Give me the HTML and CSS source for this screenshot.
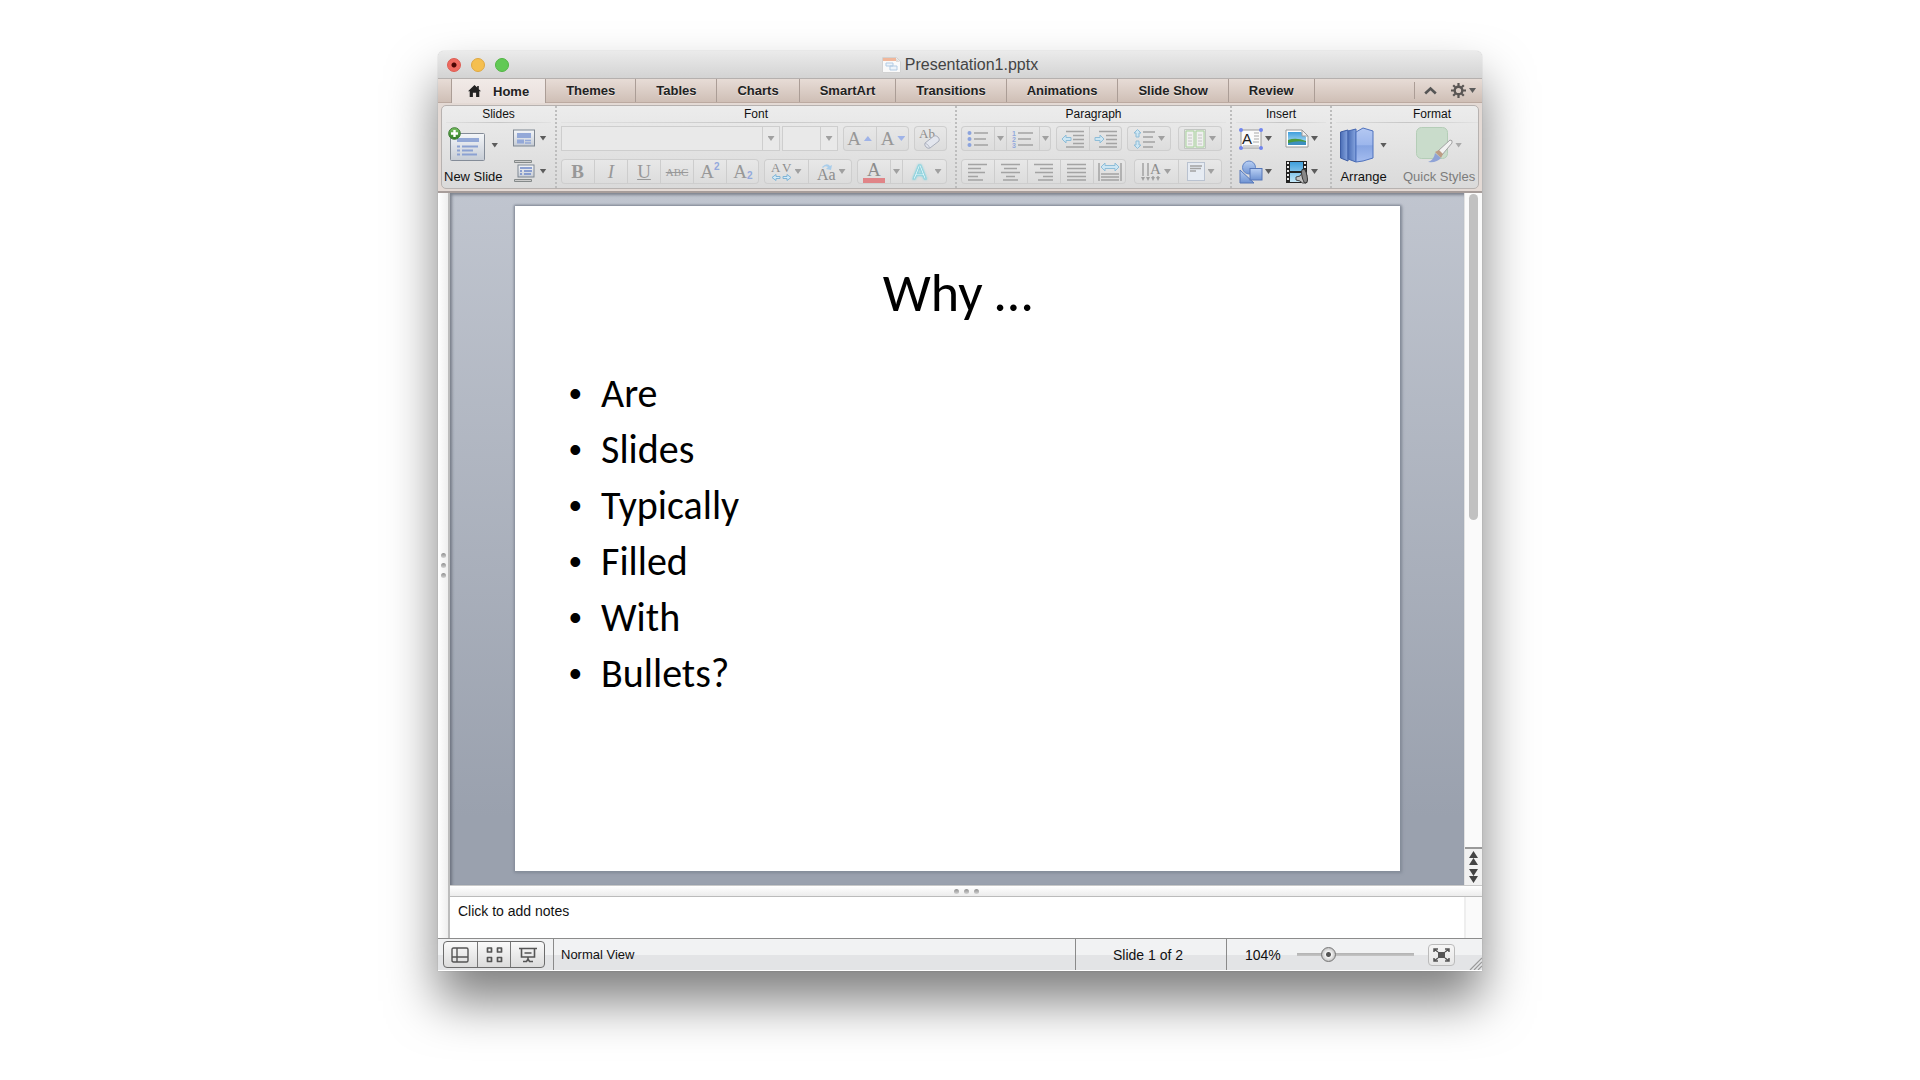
FILE: index.html
```html
<!DOCTYPE html>
<html lang="en">
<head>
<meta charset="utf-8">
<title>Presentation1.pptx</title>
<link rel="stylesheet" href="styles.css">
</head>
<body>
<svg class="defs" aria-hidden="true">
  <defs>
    <linearGradient id="paper" x1="0" y1="0" x2="0" y2="1"><stop offset="0" stop-color="#f4f6f9"/><stop offset="1" stop-color="#c6ccd5"/></linearGradient>
    <linearGradient id="blue" x1="0" y1="0" x2="0" y2="1"><stop offset="0" stop-color="#b9d0f4"/><stop offset="1" stop-color="#6f93d2"/></linearGradient>
    <linearGradient id="deep" x1="0" y1="0" x2="1" y2="0"><stop offset="0" stop-color="#4a6db5"/><stop offset="1" stop-color="#87a6e0"/></linearGradient>
    <linearGradient id="panel" x1="0" y1="0" x2="0" y2="1"><stop offset="0" stop-color="#b4c8f2"/><stop offset=".5" stop-color="#9cb6ec"/><stop offset=".52" stop-color="#86a4e2"/><stop offset="1" stop-color="#a5bdef"/></linearGradient>
    <linearGradient id="sky" x1="0" y1="0" x2="0" y2="1"><stop offset="0" stop-color="#3f9fdc"/><stop offset="1" stop-color="#c4e8f8"/></linearGradient>
    <linearGradient id="green" x1="0" y1="0" x2="0" y2="1"><stop offset="0" stop-color="#7cc365"/><stop offset="1" stop-color="#2f7a24"/></linearGradient>
  </defs>
</svg>

<main class="window">
  <header class="titlebar">
    <div class="lights">
      <button class="light close" aria-label="Close"></button>
      <button class="light minimize" aria-label="Minimize"></button>
      <button class="light maximize" aria-label="Zoom window"></button>
    </div>
    <div class="doc-title">
      <svg width="19" height="16" viewBox="0 0 19 16"><path d="M.5.5h14l4 4v11H.5z" fill="#fafafa" stroke="#d2d2d2"/><path d="M1 1h13v3H1z" fill="#f0b79b"/><path d="M14 1v4h4z" fill="#ddd"/><path d="M4 6h7v3H4zM8 9h7v4H8z" fill="#eef4fa" stroke="#b3cbe3"/></svg>
      <span>Presentation1.pptx</span>
    </div>
  </header>

  <nav class="tabs">
    <button class="tab home"><svg width="13" height="12" viewBox="0 0 13 12"><path d="M6.500 0 0 6.300h1.700V12h3.200V7.800h3.200V12h3.200V6.300H13L10.800 4.200V1H9.200v1.600z" fill="#222"/></svg>Home</button>
    <button class="tab">Themes</button>
    <button class="tab">Tables</button>
    <button class="tab">Charts</button>
    <button class="tab">SmartArt</button>
    <button class="tab">Transitions</button>
    <button class="tab">Animations</button>
    <button class="tab">Slide Show</button>
    <button class="tab">Review</button>
    <div class="tab-tools">
      <button class="plain" aria-label="Collapse ribbon"><svg width="13" height="9" viewBox="0 0 13 9"><path d="m1.200 7.500 5.300-5 5.300 5" fill="none" stroke="#555" stroke-width="2.600"/></svg></button>
      <button class="plain" aria-label="Ribbon preferences"><svg width="15" height="15" viewBox="0 0 15 15"><circle cx="7.500" cy="7.500" r="3.800" fill="none" stroke="#5a5654" stroke-width="2.400"/><path d="M7.500 0v3M7.500 12v3M0 7.500h3M12 7.500h3M2.200 2.200l2.100 2.100M10.700 10.700l2.100 2.100M12.800 2.200l-2.100 2.100M4.300 10.700l-2.100 2.100" stroke="#5a5654" stroke-width="2.200"/></svg><i class="arrow"></i></button>
    </div>
  </nav>

  <div class="ribbon">
    <div class="panel">
      <section class="group">
        <h2>Slides</h2>
        <div class="slides-tools">
          <button class="big">
            <span class="big-icon"><svg width="37" height="36" viewBox="0 0 37 36"><rect x="2.500" y="6.500" width="34" height="27" rx="1" fill="url(#paper)" stroke="#848c98"/><path d="M9 11h22v4H9z" fill="#93a8d6"/><path d="M9 19.500h3M14 19.500h16M9 23.500h3M14 23.500h11M9 27.500h3M14 27.500h15" stroke="#8ba1d2" stroke-width="2"/><circle cx="6.500" cy="6.500" r="5.800" fill="url(#green)" stroke="#3a7a30"/><path d="M6.500 3v7M3 6.500h7" stroke="#fff" stroke-width="2.400"/></svg><i class="arrow"></i></span>
            <span>New Slide</span>
          </button>
          <div class="stack">
            <button class="plain" aria-label="Layout"><svg width="22" height="24" viewBox="0 0 22 24"><rect x=".5" y="4" width="21" height="16" fill="url(#paper)" stroke="#7f8792"/><path d="M4 7h14v5H4zM4 13.500h7v4H4z" fill="#93a8d8"/><path d="M12 14.500h6M12 17h6" stroke="#93a8d8" stroke-width="1.500"/></svg><i class="arrow"></i></button>
            <button class="plain" aria-label="Section"><svg width="22" height="24" viewBox="0 0 22 24"><path d="M1.500 1.500h17v2h-17zM1.500 20.500h17v2h-17z" fill="#ccc" stroke="#858a8a"/><rect x="5" y="6" width="16" height="12" fill="url(#paper)" stroke="#7f8792"/><path d="M7 9h12M7 12h2M11 12h8M7 15h2M11 15h7" stroke="#6f88c8" stroke-width="1.600"/></svg><i class="arrow"></i></button>
          </div>
        </div>
      </section>

      <section class="group dim">
        <h2>Font</h2>
        <div class="rows">
          <div class="row">
            <div class="combos">
              <div class="combo font-name"><input type="text" aria-label="Font name"><button aria-label="Font list"><i class="arrow"></i></button></div>
              <div class="combo font-size"><input type="text" aria-label="Font size"><button aria-label="Size list"><i class="arrow"></i></button></div>
            </div>
            <div class="set"><button aria-label="Grow font"><span class="glyph thin">A</span><i class="arrow up blue"></i></button><button aria-label="Shrink font"><span class="glyph thin">A</span><i class="arrow blue"></i></button></div>
            <div class="set last"><button aria-label="Clear formatting"><svg width="26" height="23" viewBox="0 0 26 23"><text x="1" y="11" class="svg-serif" font-size="13">Ab</text><path d="m7 16 9-7q2-1 4 1t1 4l-9 7q-2 1-4-1t-1-4z" fill="#e3e6ee" stroke="#a9aebb"/><path d="M7 16q3 1 5 5" fill="none" stroke="#b5b9c5"/></svg></button></div>
          </div>
          <div class="row">
            <div class="set"><button><b class="glyph">B</b></button><button><i class="glyph">I</i></button><button><u class="glyph">U</u></button><button><s class="glyph small">ABC</s></button><button><span class="glyph thin">A</span><sup>2</sup></button><button><span class="glyph thin">A</span><sub>2</sub></button></div>
            <div class="set wide"><button aria-label="Character spacing"><svg width="21" height="22" viewBox="0 0 21 22"><text x="0" y="11" class="svg-serif" font-size="13">A</text><text x="11" y="11" class="svg-serif" font-size="13">V</text><path d="m1 16.500 4-3v2h4v2H5v2zM20 16.500l-4-3v2h-4v2h4v2z" fill="#d3eaf7" stroke="#7fb4d6"/></svg><i class="arrow"></i></button><button aria-label="Change case"><svg width="20" height="22" viewBox="0 0 20 22"><text x="1" y="19" class="svg-serif" font-size="16">Aa</text><path d="M6 6q5-5 8-1l2-1-1 5-5-1 2-2q-3-2-5 1z" fill="#a9cdea"/></svg><i class="arrow"></i></button></div>
            <div class="set color-set"><button aria-label="Font color"><svg width="24" height="24" viewBox="0 0 24 24"><text x="5" y="16" class="svg-serif" font-size="19">A</text><path d="M1 18h22v5H1z" fill="#e08487"/></svg></button><button class="drop" aria-label="Font color list"><i class="arrow"></i></button><button aria-label="Text effects"><svg width="22" height="22" viewBox="0 0 22 22"><text x="4" y="18" class="effect" font-size="20">A</text></svg><i class="arrow"></i></button></div>
          </div>
        </div>
      </section>

      <section class="group dim">
        <h2>Paragraph</h2>
        <div class="rows">
          <div class="row">
            <div class="set"><button aria-label="Bullets"><svg width="22" height="18" viewBox="0 0 22 18"><g fill="#8ba3dd"><circle cx="2.500" cy="3" r="2"/><circle cx="2.500" cy="9" r="2"/><circle cx="2.500" cy="15" r="2"/></g><path class="ln" d="M7 3h14M7 9h12M7 15h14"/></svg></button><button class="drop" aria-label="Bullet list"><i class="arrow"></i></button><button aria-label="Numbering"><svg width="22" height="18" viewBox="0 0 22 18"><g class="digits"><text x="0" y="6">1</text><text x="0" y="12">2</text><text x="0" y="18">3</text></g><path class="ln" d="M6 3h15M6 9h13M6 15h15"/></svg></button><button class="drop" aria-label="Number list"><i class="arrow"></i></button></div>
            <div class="set"><button aria-label="Decrease indent"><svg width="24" height="18" viewBox="0 0 24 18"><path class="ln" d="M5 1.500h18M12 5.500h11M12 9.500h11M12 13.500h11M5 17h18"/><path class="cy" d="m1 9 4-4v2.500h5v3H5V13z"/></svg></button><button aria-label="Increase indent"><svg width="24" height="18" viewBox="0 0 24 18"><path class="ln" d="M5 1.500h18M12 5.500h11M12 9.500h11M12 13.500h11M5 17h18"/><path class="cy" d="m10 9-4-4v2.500H1v3h5V13z"/></svg></button></div>
            <div class="set wide"><button aria-label="Line spacing"><svg width="22" height="20" viewBox="0 0 22 20"><path class="ln" d="M10 3h12M10 8h10M10 13h12M10 18h10"/><path class="cy" d="M4.500.5 8 4H6v4H3V4H1zM4.500 19.500 8 16H6v-4H3v4H1z"/></svg><i class="arrow"></i></button></div>
            <div class="set last wide"><button aria-label="Columns"><svg width="22" height="20" viewBox="0 0 22 20"><path d="M.5.500h21v19H.5z" fill="#e3e6e3" stroke="#c2c6c2"/><path d="M2 2h8v16H2zM12 2h8v16h-8z" fill="#efefef" stroke="#a8d39b"/><path d="M4 6h4M4 9h4M4 12h4M4 15h4M14 6h4M14 9h4M14 12h4M14 15h4" stroke="#c4c4c4"/></svg><i class="arrow"></i></button></div>
          </div>
          <div class="row">
            <div class="set"><button aria-label="Align left"><svg width="20" height="18" viewBox="0 0 20 18"><path class="ln" d="M0 1.500h19M0 5.500h13M0 9.500h17M0 13.500h10M0 17h15"/></svg></button><button aria-label="Center"><svg width="20" height="18" viewBox="0 0 20 18"><path class="ln" d="M0 1.500h19M3 5.500h13M0 9.500h19M5 13.500h9M2 17h15"/></svg></button><button aria-label="Align right"><svg width="20" height="18" viewBox="0 0 20 18"><path class="ln" d="M0 1.500h19M6 5.500h13M1 9.500h18M9 13.500h10M4 17h15"/></svg></button><button aria-label="Justify"><svg width="20" height="18" viewBox="0 0 20 18"><path class="ln" d="M0 1.500h19M0 5.500h19M0 9.500h19M0 13.500h19M0 17h19"/></svg></button><button aria-label="Distribute"><svg width="24" height="20" viewBox="0 0 24 20"><path class="ln" d="M1 1v18M23 1v18M3 12h18M3 15h18M3 18h18"/><path class="cy" d="m3 5 4-4v2.500h10V1l4 4-4 4V6.500H7V9z"/></svg></button></div>
            <div class="set last wide"><button aria-label="Text direction"><svg width="20" height="20" viewBox="0 0 20 20"><path class="ln" d="M2 1v13M7 1v13M12 14v2M17 14v2"/><text x="9" y="12" class="svg-serif" font-size="15">A</text><path d="M0 15h4l-2 4zM5 15h4l-2 4zM10 15h4l-2 4zM15 15h4l-2 4z" fill="#a0a0a0"/></svg><i class="arrow"></i></button><button aria-label="Align text"><svg width="18" height="19" viewBox="0 0 18 19"><rect x=".5" y=".5" width="17" height="18" fill="#e6ebf2" stroke="#b9c2d0"/><path class="ln" d="M3 4h12M3 6.500h11M3 9h6"/></svg><i class="arrow"></i></button></div>
          </div>
        </div>
      </section>

      <section class="group">
        <h2>Insert</h2>
        <div class="rows insert">
          <button class="plain" aria-label="Text box"><svg width="24" height="22" viewBox="0 0 24 22"><path d="M2 2h20v18H2z" fill="#fbfbfb" stroke="#999"/><text x="3" y="16" font-family="Liberation Sans, sans-serif" font-size="15" fill="#222">A</text><path d="M15 5h5M15 8h5M15 11h5M14 14h6M4 18h16" stroke="#a9a9a9"/><g fill="#7085ee"><circle cx="2" cy="2" r="2"/><circle cx="22" cy="2" r="2"/><circle cx="2" cy="20" r="2"/><circle cx="22" cy="20" r="2"/></g></svg><i class="arrow"></i></button>
          <button class="plain" aria-label="Picture"><svg width="24" height="22" viewBox="0 0 24 22"><path d="M1 2h16l6 6v11H1z" fill="#fff" stroke="#9a9a9a"/><path d="M3 4h13l5 5v8H3z" fill="url(#sky)"/><path d="M3 12q8-3 18 1v4H3z" fill="#4c9a3c"/><path d="M3 15q10-3 18-1v3H3z" fill="#3c8fc0"/><path d="M17 2v6h6z" fill="#eee" stroke="#9a9a9a"/></svg><i class="arrow"></i></button>
          <button class="plain" aria-label="Shape"><svg width="24" height="24" viewBox="0 0 24 24"><path d="M1 10v13h14z" fill="url(#blue)" stroke="#5677b8"/><circle cx="10" cy="7.500" r="6.500" fill="url(#blue)" stroke="#6285c6"/><rect x="11" y="8.500" width="12" height="11.500" fill="url(#blue)" stroke="#5677b8"/></svg><i class="arrow"></i></button>
          <button class="plain" aria-label="Media"><svg width="24" height="24" viewBox="0 0 24 24"><path d="M1 1h21v22H1z" fill="#222"/><path d="M5 2h13v9H5zM5 13h13v9H5z" fill="url(#sky)"/><path d="M3 2v20M20 2v20" stroke="#eee" stroke-width="2" stroke-dasharray="2 2"/><path d="m11 17 4-1 5-7q3 6 1 14-4 1-6-2l-4-1z" fill="#c4c4c4" stroke="#444"/><ellipse cx="19.500" cy="16" rx="2.500" ry="7" transform="rotate(-12 19.500 16)" fill="#888" stroke="#333"/></svg><i class="arrow"></i></button>
        </div>
      </section>

      <section class="group format">
        <h2>Format</h2>
        <div class="format-tools">
          <button class="big">
            <span class="big-icon"><svg width="34" height="36" viewBox="0 0 34 36"><path d="M.5 5 8 3v31l-7.500-3z" fill="url(#deep)" stroke="#3c5ca3"/><path d="M8 4l8-2v33l-8-3z" fill="url(#deep)" stroke="#4466b0"/><path d="m16 5 7-4 10 3v27l-10 3-7 1z" fill="url(#panel)" stroke="#4f72bd"/></svg><i class="arrow"></i></span>
            <span>Arrange</span>
          </button>
          <button class="big faded">
            <span class="big-icon"><svg width="38" height="38" viewBox="0 0 38 38"><rect x=".5" y="1.500" width="31" height="31" rx="5" fill="#c9dccb" stroke="#b4cdb7"/><path d="m22 25 12-11q3 0 2 3L26 29z" fill="#f2f2f2" stroke="#a2a2a2"/><path d="m19 26 4-2 4 4-2 4z" fill="#bd9c84"/><path d="M12 36q6-2 7-9l6 5q-4 5-13 4z" fill="#8fa3d6"/></svg><i class="arrow"></i></span>
            <span>Quick Styles</span>
          </button>
        </div>
      </section>
    </div>
  </div>

  <div class="body">
    <div class="side-grip"><i></i><i></i><i></i></div>
    <div class="content">
      <div class="stage-row">
        <div class="stage">
          <article class="slide">
            <h1>Why …</h1>
            <ul>
              <li>Are</li>
              <li>Slides</li>
              <li>Typically</li>
              <li>Filled</li>
              <li>With</li>
              <li>Bullets?</li>
            </ul>
          </article>
        </div>
        <div class="scrollbar">
          <div class="track"><div class="thumb"></div></div>
          <div class="pager">
            <button aria-label="Previous slide"><svg width="9" height="14" viewBox="0 0 9 14"><path d="M4.500 0 9 7H0zM4.500 7 9 14H0z" fill="#444"/></svg></button>
            <button aria-label="Next slide"><svg width="9" height="14" viewBox="0 0 9 14"><path d="M4.500 14 9 7H0zM4.500 7 9 0H0z" fill="#444"/></svg></button>
          </div>
        </div>
      </div>
      <div class="splitter"><i></i><i></i><i></i></div>
      <div class="notes-row">
        <p class="notes">Click to add notes</p>
        <div class="notes-track"></div>
      </div>
    </div>
  </div>

  <footer class="status">
    <div class="views">
      <button aria-label="Normal view"><svg width="18" height="16" viewBox="0 0 18 16"><path d="M2.500 1h13q1.500 0 1.500 1.500v11q0 1.500-1.500 1.500h-13Q1 15 1 13.500v-11Q1 1 2.500 1zM6 1v14M6 10h11M1 10h5" fill="none" stroke="#555" stroke-width="1.400"/></svg></button>
      <button aria-label="Slide sorter"><svg width="17" height="16" viewBox="0 0 17 16"><path d="M1.500 1h4v4h-4zM11.500 1h4v4h-4zM1.500 10.500h4v4h-4zM11.500 10.500h4v4h-4z" fill="none" stroke="#555" stroke-width="1.700" stroke-linejoin="round"/></svg></button>
      <button aria-label="Slide show"><svg width="18" height="16" viewBox="0 0 18 16"><path d="M0 1.500h18M2.500 2v8h13V2M5.500 6h7M9 10v4M4 14.500h3.500L9 12l1.500 2.500H14" fill="none" stroke="#555" stroke-width="1.600"/></svg></button>
    </div>
    <div class="mode">Normal View</div>
    <div class="count">Slide 1 of 2</div>
    <div class="zoom">
      <label for="zoom">104%</label>
      <input id="zoom" type="range" min="0" max="100" value="24">
      <button class="fit" aria-label="Fit to window"><svg width="17" height="14" viewBox="0 0 17 14"><path d="M5 4h7v6H5z" fill="#555"/><path d="m1 1 4 3M16 1l-4 3M1 13l4-3M16 13l-4-3M1 4V1h4M12 1h4v3M1 10v3h4M12 13h4v-3" fill="none" stroke="#555" stroke-width="1.500"/></svg></button>
      <svg class="resize" width="13" height="13" viewBox="0 0 13 13"><path d="M1 13 13 1M5 13l8-8M9 13l4-4" stroke="#999" stroke-width="1.200"/></svg>
    </div>
  </footer>
</main>
</body>
</html>
```
FILE: styles.css
```css
* { box-sizing: border-box; }

body {
  margin: 0;
  padding: 51px 16px 100px;
  background: #fff;
  color: #111;
  font-family: "Liberation Sans", Arial, sans-serif;
  font-size: 13px;
}

button {
  margin: 0;
  padding: 0;
  border: 0;
  background: none;
  color: inherit;
  font: inherit;
}

svg { display: block; flex: none; }
.defs { position: absolute; width: 0; height: 0; }

.window {
  max-width: 1044px;
  margin: 0 auto;
  border-radius: 6px 6px 0 0;
  background: #f4f4f4;
  box-shadow: 0 0 1px rgba(0, 0, 0, .4), 0 30px 50px rgba(0, 0, 0, .5);
}

/* Title bar */
.titlebar {
  display: grid;
  grid-template-columns: 1fr auto 1fr;
  align-items: center;
  height: 28px;
  padding: 1px 9px 0;
  border-radius: 6px 6px 0 0;
  border-bottom: 1px solid #b5b0ae;
  background: linear-gradient(#ebebeb, #d3d3d3);
}
.lights { display: flex; gap: 10px; }
.light {
  width: 14px;
  height: 14px;
  border: 1px solid #de5a50;
  border-radius: 50%;
  background: #ee6a60;
}
.close { background: radial-gradient(circle, #4c0502 0 2px, #ee6a60 3px); }
.minimize { background: #f5bf4f; border-color: #dfa842; }
.maximize { background: #62c955; border-color: #52b544; }
.doc-title {
  display: flex;
  align-items: center;
  gap: 4px;
  color: #444;
  font-size: 16px;
}

/* Tab strip */
.tabs {
  display: flex;
  height: 24px;
  padding-left: 13px;
  background: linear-gradient(#e7dcd6, #cfbfb6);
  border-bottom: 1px solid #bcaaa1;
}
.tab {
  padding: 0 20px;
  border-right: 1px solid #ab9d96;
  font-weight: bold;
  color: #222;
  text-shadow: 0 1px 0 rgba(255, 255, 255, .6);
}
.tab.home {
  display: flex;
  align-items: center;
  gap: 12px;
  height: 24px;
  padding: 0 16px;
  border-left: 1px solid #ab9d96;
  background: linear-gradient(#f1eae7, #e8dfdb);
}
.tab-tools {
  display: flex;
  align-items: center;
  gap: 14px;
  margin: 3px 6px 3px auto;
  padding-left: 9px;
  border-left: 1px solid #ab9d96;
}

.plain { display: flex; align-items: center; gap: 3px; }

.arrow {
  flex: none;
  width: 7px;
  height: 5px;
  background: #5c5c5c;
  clip-path: polygon(0 0, 100% 0, 50% 100%);
}
.arrow.up { clip-path: polygon(50% 0, 100% 100%, 0 100%); }
.arrow.blue { width: 8px; background: #9fb3e8; }
.dim .arrow:not(.blue) { background: #a0a0a0; }

/* Ribbon */
.ribbon {
  padding: 2px 3px;
  background: #e4dad5;
  border-bottom: 2px solid #a79d9a;
}
.panel {
  display: grid;
  grid-template-columns: 113px 400px 275px 100px 1fr;
  height: 84px;
  border: 1px solid #b7b2b0;
  border-radius: 5px;
  background: linear-gradient(#ececec, #dadada);
}
.group { min-width: 0; }
.group + .group { border-left: 2px dotted #bdbdbd; }
.group h2 {
  height: 17px;
  margin: 0 4px;
  font-size: 12px;
  font-weight: normal;
  line-height: 16px;
  text-align: center;
  border-bottom: 1px solid;
  border-image: linear-gradient(90deg, #e2e2e2, #c6c6c6, #e2e2e2) 1;
}
.group.format h2 { margin-right: 0; padding-left: 50px; }

.rows { display: flex; flex-direction: column; gap: 8px; padding: 3px 8px 0 4px; }
.row { display: flex; gap: 5px; height: 25px; }
.last { margin-left: auto; }

.set {
  display: flex;
  border-radius: 4px;
  background: linear-gradient(#e8e8e8, #dcdcdc);
  box-shadow: inset 0 0 0 1px #cecece;
}
.set button {
  display: flex;
  align-items: center;
  justify-content: center;
  gap: 3px;
  width: 33px;
}
.set button + button { border-left: 1px solid #cdcdcd; }
.set .drop { width: 12px; }
.wide button { width: 44px; }
.color-set button:last-child { width: 45px; gap: 4px; }

.combos { display: flex; flex: 1; gap: 2px; }
.combo {
  display: flex;
  border: 1px solid #cecece;
  background: #e9e9e9;
}
.combo input {
  flex: 1;
  min-width: 0;
  width: 100%;
  border: 0;
  padding: 0;
  background: transparent;
  font: inherit;
}
.combo button {
  display: flex;
  flex: none;
  align-items: center;
  justify-content: center;
  width: 17px;
  border-left: 1px solid #cecece;
}
.font-name { flex: 1; }
.font-size { width: 56px; }

.glyph { font-family: "Liberation Serif", serif; font-size: 19px; color: #989898; line-height: 22px; }
.glyph.small { font-size: 11px; }
.set sup, .set sub {
  margin-left: -3px;
  font-size: 10px;
  font-weight: bold;
  color: #93a9dd;
  line-height: 10px;
}
.set sup { align-self: flex-start; margin-top: 3px; }
.set sub { align-self: flex-end; margin-bottom: 3px; }
.svg-serif { font-family: "Liberation Serif", serif; fill: #8c8c8c; }
.effect { font-family: "Liberation Sans", sans-serif; fill: #f0fbfd; stroke: #8fd3de; stroke-width: 1px; filter: drop-shadow(0 0 1px #7fd0dc); }
.ln { stroke: #a3a3a3; stroke-width: 1.5; fill: none; }
.cy { fill: #cde6f3; stroke: #8ebdd8; }
.digits { font: bold 7px "Liberation Sans", sans-serif; fill: #93a9dd; }

.slides-tools { display: flex; gap: 10px; padding: 3px 0 0 2px; }
.big { display: flex; flex-direction: column; align-items: center; gap: 5px; white-space: nowrap; }
.big-icon { display: flex; align-items: center; gap: 6px; height: 38px; }
.stack { display: flex; flex-direction: column; gap: 9px; }
.stack .plain { gap: 5px; }

.insert { display: grid; grid-template-columns: 32px 32px; gap: 8px 14px; padding-left: 7px; }
.insert .plain { height: 25px; gap: 2px; }

.format-tools { display: flex; gap: 16px; padding: 3px 0 0 8px; }
.format-tools .faded { color: #7c7c7c; }
.faded .arrow { background: #aaa; }
.faded .big-icon { gap: 1px; }

/* Editing area */
.body { display: flex; }
.side-grip {
  display: flex;
  flex: none;
  flex-direction: column;
  align-items: center;
  justify-content: center;
  gap: 5px;
  width: 12px;
  border-right: 2px solid #bcbcbc;
  background: linear-gradient(90deg, #fff, #eee);
}
.side-grip i, .splitter i {
  width: 5px;
  height: 5px;
  border-radius: 50%;
  background: linear-gradient(#8f8f8f, #d2d2d2);
}
.content { flex: 1; min-width: 0; }
.stage-row { display: flex; }
.stage {
  flex: 1;
  min-width: 0;
  padding: 13px 64px 14px 65px;
  background: linear-gradient(#c0c5cf, #9aa1ae 90%);
  box-shadow: inset 2px 2px 3px rgba(80, 86, 98, .6);
}
.slide {
  aspect-ratio: 885 / 665;
  padding: 54px 54px 0;
  background: #fff;
  color: #000;
  font-family: Carlito, Calibri, Lato, sans-serif;
  box-shadow: 0 0 2px 1px #868d9a, 1px 1px 3px 1px #868d9a;
}
.slide h1 {
  margin: 0 0 40px;
  font-size: 54px;
  font-weight: normal;
  line-height: 66px;
  text-align: center;
}
.slide ul { margin: 0; padding: 0; list-style: none; }
.slide li { display: flex; font-size: 40px; line-height: 56px; }
.slide li::before {
  content: "•";
  width: 32px;
  font-family: "Liberation Sans", Arial, sans-serif;
  font-size: 36px;
}

.scrollbar {
  display: flex;
  flex: none;
  flex-direction: column;
  width: 18px;
  border-left: 1px solid #e2e2e2;
  background: #fafafa;
}
.track { flex: 1; padding: 1px 4px; }
.thumb { height: 50%; border-radius: 5px; background: #c1c1c1; }
.pager {
  display: flex;
  flex-direction: column;
  align-items: center;
  justify-content: center;
  gap: 4px;
  height: 38px;
  border-top: 2px solid #999;
  background: #f1f1f1;
}
.pager button { display: block; }

.splitter {
  display: flex;
  align-items: center;
  justify-content: center;
  gap: 5px;
  height: 12px;
  border-top: 1px solid #c9c9c9;
  border-bottom: 1px solid #bbb;
  background: linear-gradient(#fff, #ececec);
}
.notes-row { display: flex; min-height: 41px; background: #fff; }
.notes { flex: 1; margin: 0; padding: 6px 8px; font-size: 14px; line-height: 16px; }
.notes-track { width: 18px; border-left: 2px solid #eee; background: #fafafa; }

/* Status bar */
.status {
  display: flex;
  align-items: center;
  height: 33px;
  border-top: 1px solid #8c8c8c;
  border-bottom: 1px solid #fff;
  background: linear-gradient(#f1f2f3 50%, #e3e4e6 52%);
}
.views {
  display: flex;
  width: 102px;
  height: 27px;
  margin: 0 8px 0 5px;
  border: 1px solid #6c6c6c;
  border-radius: 4px;
  background: linear-gradient(#fafafa, #dcdcdc);
}
.views button {
  display: flex;
  flex: 1;
  align-items: center;
  justify-content: center;
}
.views button + button { border-left: 1px solid #777; }
.mode, .count, .zoom {
  display: flex;
  align-items: center;
  height: 100%;
  border-left: 1px solid #8a8a8a;
}
.mode { flex: 1; padding-left: 7px; }
.count { justify-content: center; width: 151px; padding-right: 6px; font-size: 14px; }
.zoom { position: relative; width: 256px; padding-left: 18px; }
.zoom label { width: 52px; font-size: 14px; }
.zoom input {
  width: 117px;
  height: 16px;
  margin: 0 14px 0 0;
  appearance: none;
  background: linear-gradient(#b2b2b2, #c4c4c4) center / 100% 3px no-repeat;
}
.zoom input::-webkit-slider-thumb {
  width: 15px;
  height: 15px;
  appearance: none;
  border: 1px solid #777;
  border-radius: 50%;
  background: radial-gradient(circle, #555 0 2px, #f4f4f4 3px, #bdbdbd 7px);
}
.fit {
  display: flex;
  align-items: center;
  justify-content: center;
  width: 27px;
  height: 22px;
  border: 1px solid #bbb;
  border-radius: 4px;
  background: linear-gradient(#f6f6f6, #e6e6e6);
}
.resize { position: absolute; right: 0; bottom: 0; }
```
